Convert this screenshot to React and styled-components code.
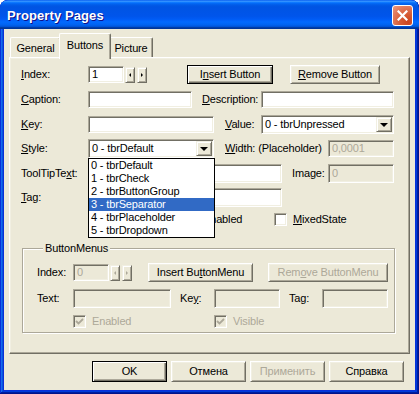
import styled, { createGlobalStyle } from "styled-components";

const GlobalStyle = createGlobalStyle`
  html, body {
    margin: 0;
    padding: 0;
    background: #ffffff;
  }
  body {
    font-family: Tahoma, "Liberation Sans", Arial, sans-serif;
    font-size: 11px;
    letter-spacing: -0.15px;
    color: #000;
  }
`;

const Window = styled.div`
  box-sizing: border-box;
  width: 419px;
  height: 394px;
  display: flex;
  flex-direction: column;
  padding: 0 4px 4px;
  background: #0831d9;
  border-radius: 8px 8px 0 0;
  overflow: hidden;
  box-shadow: inset -1px -1px #00138c, inset 1px 1px #0831d9,
    inset -2px -2px #001ea0, inset 2px 2px #166aee, inset -3px -3px #003bda,
    inset 3px 3px #0855dd;
`;

const TitleBar = styled.div`
  flex: none;
  height: 29px;
  margin: 0 -4px;
  padding: 0 6px 0 7px;
  display: flex;
  align-items: center;
  justify-content: space-between;
  border-radius: 8px 8px 0 0;
  background: linear-gradient(
    180deg,
    #0058ee 0%,
    #3a93ff 4%,
    #288eff 6%,
    #127dff 8%,
    #036ffc 10%,
    #0262ee 14%,
    #0057e5 20%,
    #0054e3 24%,
    #0055eb 56%,
    #005bf5 66%,
    #026afe 76%,
    #0062ef 86%,
    #0052d6 92%,
    #0040ab 94%,
    #003092 100%
  );
`;

const TitleText = styled.span`
  font-family: "Liberation Sans", Arial, sans-serif;
  font-weight: bold;
  font-size: 13px;
  color: #fff;
  letter-spacing: 0.1px;
  text-shadow: 1px 1px #0f1089;
  margin-top: 1px;
`;

const CloseButton = styled.div`
  box-sizing: border-box;
  width: 21px;
  height: 21px;
  margin-top: 2px;
  display: flex;
  align-items: center;
  justify-content: center;
  border: 1px solid #fff;
  border-radius: 3px;
  background: radial-gradient(
    circle at 80% 85%,
    #cc4520 0%,
    #d65a33 35%,
    #e27a5c 70%,
    #eb9a80 100%
  );
`;

const Client = styled.div`
  flex: 1;
  display: flex;
  flex-direction: column;
  padding: 4px 5px 0;
  background: #ece9d8;
`;

const TabStrip = styled.div`
  height: 24px;
  display: flex;
  align-items: flex-end;
  padding-left: 1px;
`;

const Tab = styled.div`
  position: relative;
  z-index: ${(p) => (p.$active ? 2 : 1)};
  box-sizing: border-box;
  flex: none;
  width: ${(p) => p.$w}px;
  height: ${(p) => (p.$active ? 26 : 20)}px;
  margin: 0 ${(p) => (p.$active ? -2 : 0)}px ${(p) => (p.$active ? -2 : 0)}px;
  padding-top: ${(p) => (p.$active ? 5 : 4)}px;
  display: flex;
  justify-content: center;
  line-height: 13px;
  background: #ece9d8;
  border-top: 1px solid #fff;
  border-left: 1px solid #fff;
  border-right: 1px solid #716f64;
  border-radius: 2px 2px 0 0;
  box-shadow: inset -1px 0 #aca899;
`;

const Panel = styled.div`
  position: relative;
  box-sizing: border-box;
  height: 297px;
  padding: 7px 0 0 11px;
  border: 1px solid;
  border-color: #fff #716f64 #716f64 #fff;
  box-shadow: inset -1px -1px #aca899, inset 1px 1px #f1efe2;
`;

const Row = styled.div`
  display: flex;
  align-items: center;
  height: ${(p) => p.$h || 19}px;
  margin-top: ${(p) => p.$mt || 0}px;
`;

const Label = styled.span`
  flex: none;
  box-sizing: border-box;
  width: ${(p) => p.$w}px;
  margin-left: ${(p) => p.$ml || 0}px;
  color: ${(p) => (p.$disabled ? "#aca899" : "#000")};
  white-space: nowrap;
  line-height: 13px;
`;

const TextBox = styled.div`
  flex: none;
  box-sizing: border-box;
  width: ${(p) => p.$w}px;
  height: ${(p) => p.$h || 19}px;
  margin-left: ${(p) => p.$ml || 0}px;
  padding: 0 3px;
  display: flex;
  align-items: center;
  line-height: 13px;
  background: ${(p) => (p.$disabled ? "#ece9d8" : "#fff")};
  color: ${(p) => (p.$disabled ? "#aca899" : "#000")};
  border: 1px solid;
  border-color: #aca899 #fff #fff #aca899;
  box-shadow: inset 1px 1px #716f64, inset -1px -1px #f1efe2;
`;

const SpinButton = styled.div`
  flex: none;
  box-sizing: border-box;
  width: 10px;
  height: 16px;
  margin-left: ${(p) => p.$ml || 0}px;
  display: flex;
  align-items: center;
  justify-content: center;
  background: #ece9d8;
  border: 1px solid;
  border-color: #f1efe2 #716f64 #716f64 #f1efe2;
  box-shadow: inset 1px 1px #fff, inset -1px -1px #aca899;

  &::after {
    content: "";
    border-top: 2px solid transparent;
    border-bottom: 2px solid transparent;
    ${(p) => (p.$dir === "left" ? "border-right" : "border-left")}: 2px solid
      ${(p) => (p.$disabled ? "#aca899" : "#000")};
  }
`;

const Button = styled.div`
  flex: none;
  box-sizing: border-box;
  width: ${(p) => p.$w}px;
  height: ${(p) => p.$h || 19}px;
  margin-left: ${(p) => p.$ml || 0}px;
  display: flex;
  align-items: center;
  justify-content: center;
  white-space: nowrap;
  line-height: 13px;
  background: #ece9d8;
  color: ${(p) => (p.$disabled ? "#aca899" : "#000")};
  border: 1px solid;
  border-color: ${(p) =>
    p.$default ? "#000" : "#fff #716f64 #716f64 #fff"};
  box-shadow: ${(p) =>
    p.$default
      ? "inset 1px 1px #fff, inset -1px -1px #716f64, inset -2px -2px #aca899"
      : "inset 1px 1px #f1efe2, inset -1px -1px #aca899"};
`;

const Combo = styled.div`
  position: relative;
  flex: none;
  box-sizing: border-box;
  width: ${(p) => p.$w}px;
  height: 19px;
  margin-left: ${(p) => p.$ml || 0}px;
  padding: 1px;
  display: flex;
  align-items: stretch;
  background: #fff;
  border: 1px solid;
  border-color: #aca899 #fff #fff #aca899;
  box-shadow: inset 1px 1px #716f64, inset -1px -1px #f1efe2;
`;

const ComboText = styled.div`
  flex: 1;
  display: flex;
  align-items: center;
  padding-left: 2px;
  line-height: 13px;
  white-space: nowrap;
`;

const DropButton = styled.div`
  flex: none;
  box-sizing: border-box;
  width: 16px;
  display: flex;
  align-items: center;
  justify-content: center;
  background: #ece9d8;
  border: 1px solid;
  border-color: #f1efe2 #716f64 #716f64 #f1efe2;
  box-shadow: inset 1px 1px #fff, inset -1px -1px #aca899;

  &::after {
    content: "";
    margin-top: 1px;
    border-left: 4px solid transparent;
    border-right: 4px solid transparent;
    border-top: 4px solid #000;
  }
`;

const DropList = styled.div`
  position: absolute;
  z-index: 5;
  top: calc(100% + 1px);
  left: -1px;
  box-sizing: border-box;
  width: 127px;
  border: 1px solid #000;
  background: #fff;
`;

const DropItem = styled.div`
  height: 13px;
  padding-left: 2px;
  line-height: 13px;
  white-space: nowrap;
  background: ${(p) => (p.$selected ? "#316ac5" : "#fff")};
  color: ${(p) => (p.$selected ? "#fff" : "#000")};
`;

const CheckItem = styled.div`
  flex: none;
  box-sizing: border-box;
  width: ${(p) => (p.$w ? `${p.$w}px` : "auto")};
  margin-left: ${(p) => p.$ml || 0}px;
  display: flex;
  align-items: center;
  gap: 6px;
  line-height: 13px;
  color: ${(p) => (p.$disabled ? "#aca899" : "#000")};
`;

const CheckBox = styled.div`
  flex: none;
  box-sizing: border-box;
  width: 13px;
  height: 13px;
  display: flex;
  align-items: center;
  justify-content: center;
  background: ${(p) => (p.$disabled ? "#ece9d8" : "#fff")};
  border: 1px solid;
  border-color: #aca899 #fff #fff #aca899;
  box-shadow: inset 1px 1px #716f64, inset -1px -1px #f1efe2;
`;

const GroupBox = styled.fieldset`
  box-sizing: border-box;
  width: 373px;
  min-width: 0;
  margin: 13px 0 0 1px;
  padding: 8px 0 1px 14px;
  border: 1px solid #aca899;
  box-shadow: inset 1px 1px #fff, 1px 1px #fff;
`;

const GroupTitle = styled.legend`
  margin-left: 6px;
  padding: 0 2px;
  line-height: 13px;
  background: #ece9d8;
`;

const ButtonBar = styled.div`
  display: flex;
  justify-content: flex-end;
  gap: 4px;
  margin: 7px 6px 0 0;
`;

const styleItems = [
  "0 - tbrDefault",
  "1 - tbrCheck",
  "2 - tbrButtonGroup",
  "3 - tbrSeparator",
  "4 - tbrPlaceholder",
  "5 - tbrDropdown",
];

function Check({ disabled, checked }) {
  return (
    <CheckBox $disabled={disabled}>
      {checked && (
        <svg width="9" height="9" viewBox="0 0 9 9">
          <path
            d="M1 4 L3.5 6.5 L8 2"
            fill="none"
            stroke={disabled ? "#aca899" : "#000"}
            strokeWidth="1.8"
          />
        </svg>
      )}
    </CheckBox>
  );
}

export default function App() {
  return (
    <>
      <GlobalStyle />
      <Window>
        <TitleBar>
          <TitleText>Property Pages</TitleText>
          <CloseButton>
            <svg width="11" height="11" viewBox="0 0 11 11">
              <path
                d="M1.5 1.5 L9.5 9.5 M9.5 1.5 L1.5 9.5"
                stroke="#fff"
                strokeWidth="2.2"
                strokeLinecap="square"
              />
            </svg>
          </CloseButton>
        </TitleBar>
        <Client>
          <TabStrip>
            <Tab $w={51}>General</Tab>
            <Tab $w={52} $active>
              Buttons
            </Tab>
            <Tab $w={44}>Picture</Tab>
          </TabStrip>
          <Panel>
            <Row>
              <Label $w={67}>
                <u>I</u>ndex:
              </Label>
              <TextBox $w={36} $h={17}>
                1
              </TextBox>
              <SpinButton $ml={1} $dir="left" />
              <SpinButton $ml={2} $dir="right" />
              <Button $w={86} $ml={40} $default>
                I<u>n</u>sert Button
              </Button>
              <Button $w={90} $ml={17}>
                <u>R</u>emove Button
              </Button>
            </Row>
            <Row $mt={6}>
              <Label $w={67}>
                <u>C</u>aption:
              </Label>
              <TextBox $w={104} $h={17} />
              <Label $w={59} $ml={10}>
                <u>D</u>escription:
              </Label>
              <TextBox $w={133} $h={17} />
            </Row>
            <Row $mt={6}>
              <Label $w={67}>
                <u>K</u>ey:
              </Label>
              <TextBox $w={126} $h={17} />
              <Label $w={36} $ml={11}>
                <u>V</u>alue:
              </Label>
              <Combo $w={133}>
                <ComboText>0 - tbrUnpressed</ComboText>
                <DropButton />
              </Combo>
            </Row>
            <Row $mt={5}>
              <Label $w={67}>
                <u>S</u>tyle:
              </Label>
              <Combo $w={126}>
                <ComboText>0 - tbrDefault</ComboText>
                <DropButton />
                <DropList>
                  {styleItems.map((item, i) => (
                    <DropItem key={item} $selected={i === 3}>
                      {item}
                    </DropItem>
                  ))}
                </DropList>
              </Combo>
              <Label $w={103} $ml={11}>
                <u>W</u>idth: (Placeholder)
              </Label>
              <TextBox $w={66} $h={17} $disabled>
                0,0001
              </TextBox>
            </Row>
            <Row $mt={6}>
              <Label $w={67}>
                ToolTipTe<u>x</u>t:
              </Label>
              <TextBox $w={194} />
              <Label $w={36} $ml={10}>
                Ima<u>g</u>e:
              </Label>
              <TextBox $w={66} $disabled>
                0
              </TextBox>
            </Row>
            <Row $mt={5}>
              <Label $w={67}>
                <u>T</u>ag:
              </Label>
              <TextBox $w={194} />
            </Row>
            <Row $mt={3}>
              <Label $w={163} />
              <CheckItem $w={90}>
                <Check checked />
                Enabled
              </CheckItem>
              <CheckItem>
                <Check />
                <span>
                  <u>M</u>ixedState
                </span>
              </CheckItem>
            </Row>
            <GroupBox>
              <GroupTitle>ButtonMenus</GroupTitle>
              <Row>
                <Label $w={36}>Index:</Label>
                <TextBox $w={36} $h={17} $disabled>
                  0
                </TextBox>
                <SpinButton $ml={1} $dir="left" $disabled />
                <SpinButton $ml={2} $dir="right" $disabled />
                <Button $w={105} $ml={16}>
                  Insert Bu<u>t</u>tonMenu
                </Button>
                <Button $w={120} $ml={15} $disabled>
                  Rem<u>o</u>ve ButtonMenu
                </Button>
              </Row>
              <Row $mt={7}>
                <Label $w={36}>Text:</Label>
                <TextBox $w={98} $disabled />
                <Label $w={34} $ml={9}>
                  Ke<u>y</u>:
                </Label>
                <TextBox $w={66} $disabled />
                <Label $w={33} $ml={9}>
                  Tag:
                </Label>
                <TextBox $w={66} $disabled />
              </Row>
              <Row $mt={4}>
                <Label $w={36} />
                <CheckItem $w={141} $disabled>
                  <Check checked disabled />
                  Enabled
                </CheckItem>
                <CheckItem $disabled>
                  <Check checked disabled />
                  Visible
                </CheckItem>
              </Row>
            </GroupBox>
          </Panel>
          <ButtonBar>
            <Button $w={75} $h={21} $default>
              OK
            </Button>
            <Button $w={75} $h={21}>
              Отмена
            </Button>
            <Button $w={75} $h={21} $disabled>
              Применить
            </Button>
            <Button $w={75} $h={21}>
              Справка
            </Button>
          </ButtonBar>
        </Client>
      </Window>
    </>
  );
}
